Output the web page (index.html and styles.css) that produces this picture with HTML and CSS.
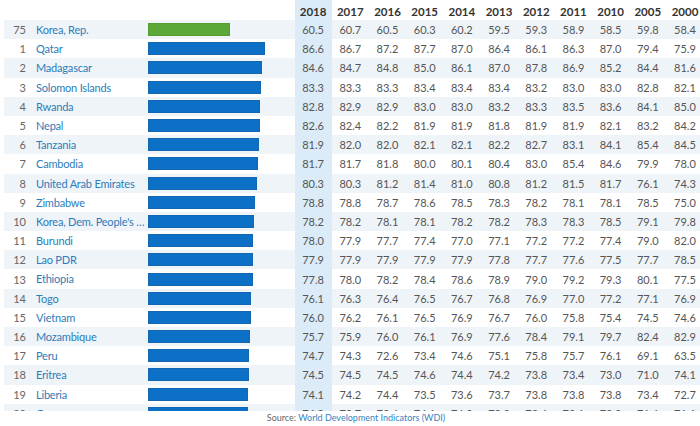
FILE: index.html
```html
<!DOCTYPE html>
<html>
<head>
<meta charset="utf-8">
<link rel="stylesheet" href="styles.css">
</head>
<body>
<div class="board">
  <div class="row head">
    <div class="rank"></div><div class="name"></div><div class="barcell"></div>
    <div class="num cur">2018</div><div class="num">2017</div><div class="num">2016</div><div class="num">2015</div><div class="num">2014</div><div class="num">2013</div><div class="num">2012</div><div class="num">2011</div><div class="num">2010</div><div class="num">2005</div><div class="num">2000</div>
  </div>
  <div class="row odd">
    <div class="rank">75</div><div class="name">Korea, Rep.</div><div class="barcell"><div class="bar green" style="width:81.7px"></div></div>
    <div class="num cur">60.5</div><div class="num">60.7</div><div class="num">60.5</div><div class="num">60.3</div><div class="num">60.2</div><div class="num">59.5</div><div class="num">59.3</div><div class="num">58.9</div><div class="num">58.5</div><div class="num">59.8</div><div class="num">58.4</div>
  </div>
  <div class="row">
    <div class="rank">1</div><div class="name">Qatar</div><div class="barcell"><div class="bar" style="width:117px"></div></div>
    <div class="num cur">86.6</div><div class="num">86.7</div><div class="num">87.2</div><div class="num">87.7</div><div class="num">87.0</div><div class="num">86.4</div><div class="num">86.1</div><div class="num">86.3</div><div class="num">87.0</div><div class="num">79.4</div><div class="num">75.9</div>
  </div>
  <div class="row odd">
    <div class="rank">2</div><div class="name">Madagascar</div><div class="barcell"><div class="bar" style="width:114.3px"></div></div>
    <div class="num cur">84.6</div><div class="num">84.7</div><div class="num">84.8</div><div class="num">85.0</div><div class="num">86.1</div><div class="num">87.0</div><div class="num">87.8</div><div class="num">86.9</div><div class="num">85.2</div><div class="num">84.4</div><div class="num">81.6</div>
  </div>
  <div class="row">
    <div class="rank">3</div><div class="name">Solomon Islands</div><div class="barcell"><div class="bar" style="width:112.5px"></div></div>
    <div class="num cur">83.3</div><div class="num">83.3</div><div class="num">83.3</div><div class="num">83.4</div><div class="num">83.4</div><div class="num">83.4</div><div class="num">83.2</div><div class="num">83.0</div><div class="num">83.0</div><div class="num">82.8</div><div class="num">82.1</div>
  </div>
  <div class="row odd">
    <div class="rank">4</div><div class="name">Rwanda</div><div class="barcell"><div class="bar" style="width:111.9px"></div></div>
    <div class="num cur">82.8</div><div class="num">82.9</div><div class="num">82.9</div><div class="num">83.0</div><div class="num">83.0</div><div class="num">83.2</div><div class="num">83.3</div><div class="num">83.5</div><div class="num">83.6</div><div class="num">84.1</div><div class="num">85.0</div>
  </div>
  <div class="row">
    <div class="rank">5</div><div class="name">Nepal</div><div class="barcell"><div class="bar" style="width:111.6px"></div></div>
    <div class="num cur">82.6</div><div class="num">82.4</div><div class="num">82.2</div><div class="num">81.9</div><div class="num">81.9</div><div class="num">81.8</div><div class="num">81.9</div><div class="num">81.9</div><div class="num">82.1</div><div class="num">83.2</div><div class="num">84.2</div>
  </div>
  <div class="row odd">
    <div class="rank">6</div><div class="name">Tanzania</div><div class="barcell"><div class="bar" style="width:110.6px"></div></div>
    <div class="num cur">81.9</div><div class="num">82.0</div><div class="num">82.0</div><div class="num">82.1</div><div class="num">82.1</div><div class="num">82.2</div><div class="num">82.7</div><div class="num">83.1</div><div class="num">84.1</div><div class="num">85.4</div><div class="num">84.5</div>
  </div>
  <div class="row">
    <div class="rank">7</div><div class="name">Cambodia</div><div class="barcell"><div class="bar" style="width:110.4px"></div></div>
    <div class="num cur">81.7</div><div class="num">81.7</div><div class="num">81.8</div><div class="num">80.0</div><div class="num">80.1</div><div class="num">80.4</div><div class="num">83.0</div><div class="num">85.4</div><div class="num">84.6</div><div class="num">79.9</div><div class="num">78.0</div>
  </div>
  <div class="row odd">
    <div class="rank">8</div><div class="name">United Arab Emirates</div><div class="barcell"><div class="bar" style="width:108.5px"></div></div>
    <div class="num cur">80.3</div><div class="num">80.3</div><div class="num">81.2</div><div class="num">81.4</div><div class="num">81.0</div><div class="num">80.8</div><div class="num">81.2</div><div class="num">81.5</div><div class="num">81.7</div><div class="num">76.1</div><div class="num">74.3</div>
  </div>
  <div class="row">
    <div class="rank">9</div><div class="name">Zimbabwe</div><div class="barcell"><div class="bar" style="width:106.5px"></div></div>
    <div class="num cur">78.8</div><div class="num">78.8</div><div class="num">78.7</div><div class="num">78.6</div><div class="num">78.5</div><div class="num">78.3</div><div class="num">78.2</div><div class="num">78.1</div><div class="num">78.1</div><div class="num">78.5</div><div class="num">75.0</div>
  </div>
  <div class="row odd">
    <div class="rank">10</div><div class="name">Korea, Dem. People's Rep.</div><div class="barcell"><div class="bar" style="width:105.6px"></div></div>
    <div class="num cur">78.2</div><div class="num">78.2</div><div class="num">78.1</div><div class="num">78.1</div><div class="num">78.2</div><div class="num">78.2</div><div class="num">78.3</div><div class="num">78.3</div><div class="num">78.5</div><div class="num">79.1</div><div class="num">79.8</div>
  </div>
  <div class="row">
    <div class="rank">11</div><div class="name">Burundi</div><div class="barcell"><div class="bar" style="width:105.4px"></div></div>
    <div class="num cur">78.0</div><div class="num">77.9</div><div class="num">77.7</div><div class="num">77.4</div><div class="num">77.0</div><div class="num">77.1</div><div class="num">77.2</div><div class="num">77.2</div><div class="num">77.4</div><div class="num">79.0</div><div class="num">82.0</div>
  </div>
  <div class="row odd">
    <div class="rank">12</div><div class="name">Lao PDR</div><div class="barcell"><div class="bar" style="width:105.2px"></div></div>
    <div class="num cur">77.9</div><div class="num">77.9</div><div class="num">77.9</div><div class="num">77.9</div><div class="num">77.9</div><div class="num">77.8</div><div class="num">77.7</div><div class="num">77.6</div><div class="num">77.5</div><div class="num">77.7</div><div class="num">78.5</div>
  </div>
  <div class="row">
    <div class="rank">13</div><div class="name">Ethiopia</div><div class="barcell"><div class="bar" style="width:105.1px"></div></div>
    <div class="num cur">77.8</div><div class="num">78.0</div><div class="num">78.2</div><div class="num">78.4</div><div class="num">78.6</div><div class="num">78.9</div><div class="num">79.0</div><div class="num">79.2</div><div class="num">79.3</div><div class="num">80.1</div><div class="num">77.5</div>
  </div>
  <div class="row odd">
    <div class="rank">14</div><div class="name">Togo</div><div class="barcell"><div class="bar" style="width:102.8px"></div></div>
    <div class="num cur">76.1</div><div class="num">76.3</div><div class="num">76.4</div><div class="num">76.5</div><div class="num">76.7</div><div class="num">76.8</div><div class="num">76.9</div><div class="num">77.0</div><div class="num">77.2</div><div class="num">77.1</div><div class="num">76.9</div>
  </div>
  <div class="row">
    <div class="rank">15</div><div class="name">Vietnam</div><div class="barcell"><div class="bar" style="width:102.7px"></div></div>
    <div class="num cur">76.0</div><div class="num">76.2</div><div class="num">76.1</div><div class="num">76.5</div><div class="num">76.9</div><div class="num">76.7</div><div class="num">76.0</div><div class="num">75.8</div><div class="num">75.4</div><div class="num">74.5</div><div class="num">74.6</div>
  </div>
  <div class="row odd">
    <div class="rank">16</div><div class="name">Mozambique</div><div class="barcell"><div class="bar" style="width:102.3px"></div></div>
    <div class="num cur">75.7</div><div class="num">75.9</div><div class="num">76.0</div><div class="num">76.1</div><div class="num">76.9</div><div class="num">77.6</div><div class="num">78.4</div><div class="num">79.1</div><div class="num">79.7</div><div class="num">82.4</div><div class="num">82.9</div>
  </div>
  <div class="row">
    <div class="rank">17</div><div class="name">Peru</div><div class="barcell"><div class="bar" style="width:100.9px"></div></div>
    <div class="num cur">74.7</div><div class="num">74.3</div><div class="num">72.6</div><div class="num">73.4</div><div class="num">74.6</div><div class="num">75.1</div><div class="num">75.8</div><div class="num">75.7</div><div class="num">76.1</div><div class="num">69.1</div><div class="num">63.5</div>
  </div>
  <div class="row odd">
    <div class="rank">18</div><div class="name">Eritrea</div><div class="barcell"><div class="bar" style="width:100.6px"></div></div>
    <div class="num cur">74.5</div><div class="num">74.5</div><div class="num">74.5</div><div class="num">74.6</div><div class="num">74.4</div><div class="num">74.2</div><div class="num">73.8</div><div class="num">73.4</div><div class="num">73.0</div><div class="num">71.0</div><div class="num">74.1</div>
  </div>
  <div class="row">
    <div class="rank">19</div><div class="name">Liberia</div><div class="barcell"><div class="bar" style="width:100.1px"></div></div>
    <div class="num cur">74.1</div><div class="num">74.2</div><div class="num">74.4</div><div class="num">73.5</div><div class="num">73.6</div><div class="num">73.7</div><div class="num">73.8</div><div class="num">73.8</div><div class="num">73.8</div><div class="num">73.4</div><div class="num">72.7</div>
  </div>
  <div class="row odd">
    <div class="rank">20</div><div class="name">Guyana</div><div class="barcell"><div class="bar" style="width:100px"></div></div>
    <div class="num cur">74.0</div><div class="num">73.7</div><div class="num">73.6</div><div class="num">74.1</div><div class="num">74.0</div><div class="num">73.8</div><div class="num">73.4</div><div class="num">73.1</div><div class="num">72.9</div><div class="num">71.6</div><div class="num">71.1</div>
  </div>
</div>
<p class="source">Source: <span class="link">World Development Indicators (WDI)</span></p>
</body>
</html>
```

FILE: styles.css
```css
html, body {
  margin: 0;
  padding: 0;
  background: #ffffff;
}
body {
  width: 700px;
  height: 426px;
  overflow: hidden;
  font-family: "Lato", "Open Sans", sans-serif;
  font-size: 11px;
  color: #555;
}
.board {
  height: 411px;
  overflow: hidden;
  margin-left: 4px;
}
.row {
  display: grid;
  grid-template-columns: 32px 112px 146.5px repeat(11, 37.2px);
  height: 19.2px;
  align-items: stretch;
}
.row.head {
  height: 20px;
  font-weight: 700;
  color: #333;
  font-size: 11.5px;
}
.row.odd {
  background: #eff4f9;
}
.rank, .num {
  display: flex;
  align-items: center;
  white-space: nowrap;
}
.rank {
  justify-content: flex-end;
  padding-right: 10px;
  color: #666;
}
.name {
  display: block;
  color: #2c7cb8;
  overflow: hidden;
  min-width: 0;
  white-space: nowrap;
  line-height: 19.2px;
  text-overflow: ellipsis;
  letter-spacing: -0.2px;
}
.num {
  justify-content: center;
}
.cur {
  background: #dbebf8;
}
.head .num {
  padding-top: 2px;
}
.barcell {
  display: flex;
  align-items: center;
}
.bar {
  height: 13px;
  background: #0b70c6;
  box-sizing: border-box;
  border: 1px solid #1267b0;
}
.bar.green {
  background: #5ba838;
  border-color: #539d33;
}
.source {
  margin: 0;
  height: 15px;
  line-height: 13px;
  text-align: center;
  padding-left: 12px;
  font-size: 9px;
  color: #666;
}
.link {
  color: #3a82bd;
}
```
